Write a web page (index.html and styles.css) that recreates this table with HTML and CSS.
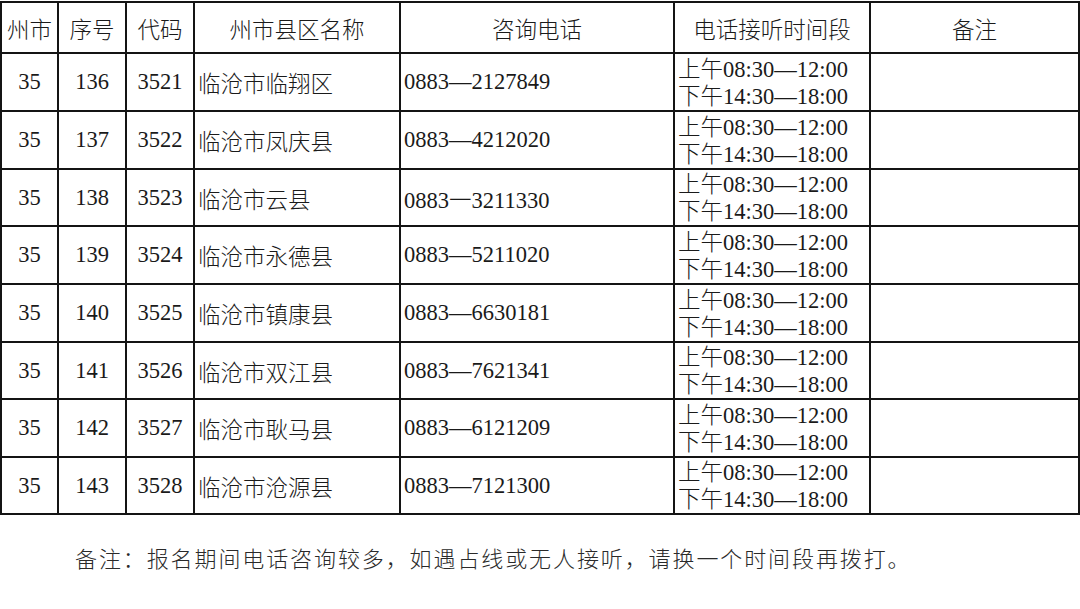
FILE: index.html
```
<!DOCTYPE html>
<html lang="zh-CN">
<head>
<meta charset="utf-8">
<title>咨询电话</title>
<link rel="stylesheet" href="styles.css">
</head>
<body>
<table class="tbl">
  <colgroup>
    <col class="c1"><col class="c2"><col class="c3"><col class="c4"><col class="c5"><col class="c6"><col class="c7">
  </colgroup>
  <thead>
    <tr class="head">
      <th>州市</th><th>序号</th><th>代码</th><th>州市县区名称</th><th>咨询电话</th><th>电话接听时间段</th><th>备注</th>
    </tr>
  </thead>
  <tbody>
    <tr><td class="num">35</td><td class="num">136</td><td class="num">3521</td><td class="txt">临沧市临翔区</td><td class="txt">0883—2127849</td><td class="time">上午08:30—12:00<br>下午14:30—18:00</td><td></td></tr>
    <tr><td class="num">35</td><td class="num">137</td><td class="num">3522</td><td class="txt">临沧市凤庆县</td><td class="txt">0883—4212020</td><td class="time">上午08:30—12:00<br>下午14:30—18:00</td><td></td></tr>
    <tr class="short"><td class="num">35</td><td class="num">138</td><td class="num">3523</td><td class="txt">临沧市云县</td><td class="txt">0883一3211330</td><td class="time">上午08:30—12:00<br>下午14:30—18:00</td><td></td></tr>
    <tr><td class="num">35</td><td class="num">139</td><td class="num">3524</td><td class="txt">临沧市永德县</td><td class="txt">0883—5211020</td><td class="time">上午08:30—12:00<br>下午14:30—18:00</td><td></td></tr>
    <tr><td class="num">35</td><td class="num">140</td><td class="num">3525</td><td class="txt">临沧市镇康县</td><td class="txt">0883—6630181</td><td class="time">上午08:30—12:00<br>下午14:30—18:00</td><td></td></tr>
    <tr class="short"><td class="num">35</td><td class="num">141</td><td class="num">3526</td><td class="txt">临沧市双江县</td><td class="txt">0883—7621341</td><td class="time">上午08:30—12:00<br>下午14:30—18:00</td><td></td></tr>
    <tr><td class="num">35</td><td class="num">142</td><td class="num">3527</td><td class="txt">临沧市耿马县</td><td class="txt">0883—6121209</td><td class="time">上午08:30—12:00<br>下午14:30—18:00</td><td></td></tr>
    <tr class="short"><td class="num">35</td><td class="num">143</td><td class="num">3528</td><td class="txt">临沧市沧源县</td><td class="txt">0883—7121300</td><td class="time">上午08:30—12:00<br>下午14:30—18:00</td><td></td></tr>
  </tbody>
</table>
<p class="note">备注：报名期间电话咨询较多，如遇占线或无人接听，请换一个时间段再拨打。</p>
</body>
</html>
```
FILE: styles.css
```
html, body {
  margin: 0;
  padding: 0;
  background: #ffffff;
}
body {
  width: 1080px;
  height: 609px;
  overflow: hidden;
  font-family: "Liberation Serif", "Noto Sans CJK SC", serif;
  font-weight: 300;
  color: #1a1a1a;
}
.tbl {
  border-collapse: collapse;
  table-layout: fixed;
  width: 1078px;
  margin: 1px 0 0 0;
  font-size: 22.5px;
}
.c1 { width: 57px; }
.c2 { width: 68px; }
.c3 { width: 68px; }
.c4 { width: 206px; }
.c5 { width: 274px; }
.c6 { width: 196px; }
.c7 { width: 209px; }
.tbl th, .tbl td {
  border: 2px solid #141414;
  padding: 0;
  vertical-align: middle;
  white-space: nowrap;
  overflow: hidden;
}
.tbl th {
  font-weight: 300;
  text-align: center;
  height: 49px;
}
.tbl tbody tr {
  height: 58px;
}
.tbl tbody tr.short {
  height: 57px;
}
.num {
  text-align: center;
}
.txt {
  text-align: left;
  padding-left: 3px !important;
}
.time {
  text-align: left;
  padding-left: 3px !important;
  padding-top: 1px !important;
  line-height: 27px;
}
.note {
  margin: 30px 0 0 75px;
  font-size: 22px;
  letter-spacing: 1.9px;
  line-height: 30px;
  color: #2a2a2a;
}
```
